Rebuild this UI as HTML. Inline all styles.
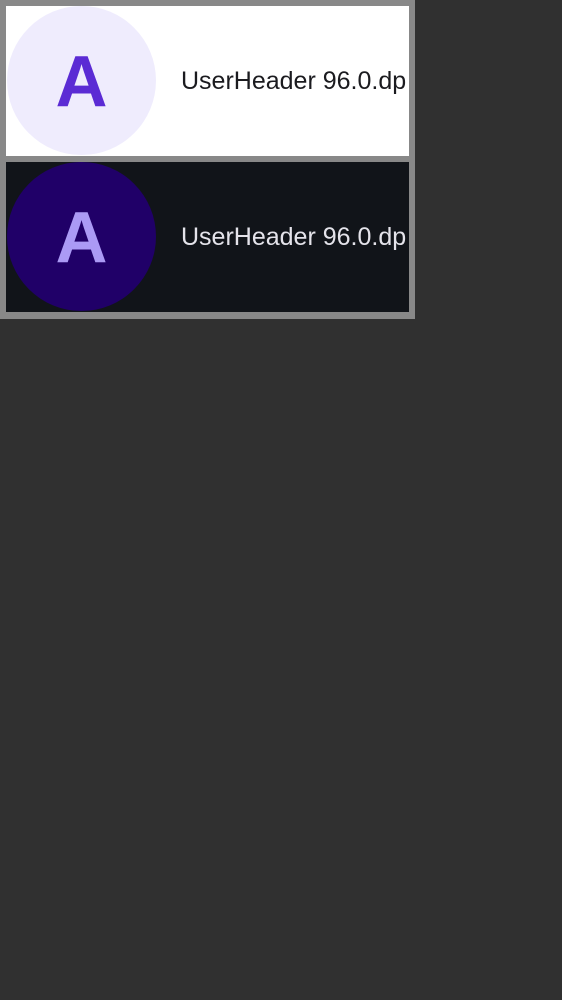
<!DOCTYPE html>
<html><head><style>
html,body{margin:0;padding:0;background:#303030;width:562px;height:1000px;overflow:hidden}
.frame{position:absolute;left:0;top:0;width:415px;height:319px;background:#888}
.panel{position:absolute;left:6px;width:403px;height:150px;overflow:hidden}
.circle{position:absolute;left:1px;top:0;width:149px;height:149px;border-radius:50%;
 font-family:"Liberation Sans",sans-serif;font-weight:bold;font-size:72px;line-height:153px;text-align:center}
.t{position:absolute;left:175px;top:0;line-height:150px;font-family:"Liberation Sans",sans-serif;font-size:25px;white-space:nowrap;letter-spacing:0px}
</style></head><body>
<div class="frame"></div>
<div class="panel" style="top:6px;background:#fff">
 <div class="circle" style="background:#efecfd;color:#5b2bd4">A</div>
 <div class="t" style="color:#1b1b1f">UserHeader 96.0.dp</div>
</div>
<div class="panel" style="top:162px;background:#111419">
 <div class="circle" style="background:#200068;color:#ab9af5">A</div>
 <div class="t" style="color:#e4e3ea">UserHeader 96.0.dp</div>
</div>
</body></html>
